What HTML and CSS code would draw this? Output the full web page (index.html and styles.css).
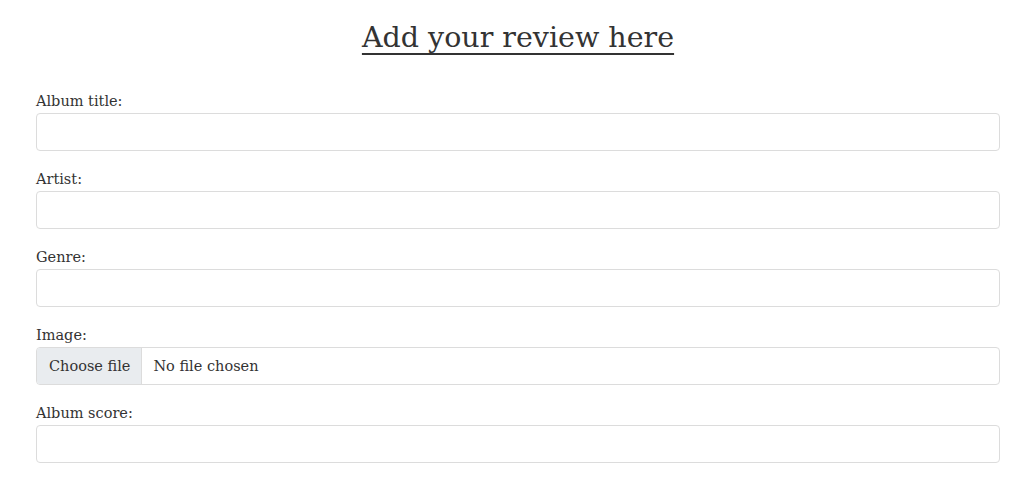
FILE: index.html
```html
<!DOCTYPE html>
<html lang="en">
<head>
<meta charset="utf-8">
<title>Add your review</title>
<link rel="stylesheet" href="styles.css">
</head>
<body>
<main class="page">
  <h1 class="title">Add your review here</h1>
  <form class="review-form">
    <div class="field">
      <label class="field-label" for="album">Album title:</label>
      <input class="field-input" id="album" type="text">
    </div>
    <div class="field">
      <label class="field-label" for="artist">Artist:</label>
      <input class="field-input" id="artist" type="text">
    </div>
    <div class="field">
      <label class="field-label" for="genre">Genre:</label>
      <input class="field-input" id="genre" type="text">
    </div>
    <div class="field">
      <span class="field-label">Image:</span>
      <label class="file-input" for="image">
        <input class="file-hidden" id="image" type="file">
        <span class="file-button">Choose file</span>
        <span class="file-name">No file chosen</span>
      </label>
    </div>
    <div class="field">
      <label class="field-label" for="score">Album score:</label>
      <input class="field-input" id="score" type="text">
    </div>
  </form>
</main>
</body>
</html>
```

FILE: styles.css
```css
html, body {
  margin: 0;
  padding: 0;
  background: #ffffff;
}

body {
  font-family: "DejaVu Serif", "Liberation Serif", serif;
  color: #333333;
}

.page {
  padding: 0 33px 0 36px;
}

.title {
  margin: 0;
  padding-top: 18px;
  text-align: center;
  font-size: 28.5px;
  font-weight: normal;
  line-height: 40px;
  text-decoration: underline;
  text-decoration-thickness: 2px;
  text-underline-offset: 6px;
  color: #333333;
}

.review-form {
  display: flex;
  flex-direction: column;
  gap: 16px;
  margin-top: 31px;
}

.field {
  display: flex;
  flex-direction: column;
}

.field-label {
  font-size: 14.5px;
  line-height: 24px;
  color: #333333;
}

.field-input {
  box-sizing: border-box;
  height: 38px;
  width: 100%;
  margin: 0;
  padding: 6px 12px;
  border: 1px solid #dcdcdc;
  border-radius: 4px;
  font: inherit;
  font-size: 15px;
  background: #ffffff;
}

.file-input {
  box-sizing: border-box;
  display: flex;
  align-items: stretch;
  height: 38px;
  border: 1px solid #dcdcdc;
  border-radius: 4px;
  overflow: hidden;
  font-size: 14.5px;
  color: #333333;
}

.file-hidden {
  display: none;
}

.file-button {
  display: flex;
  align-items: center;
  padding: 0 11px 0 12px;
  background: #e9ecef;
  border-right: 1px solid #dcdcdc;
}

.file-name {
  display: flex;
  align-items: center;
  padding: 0 11px;
}
```
